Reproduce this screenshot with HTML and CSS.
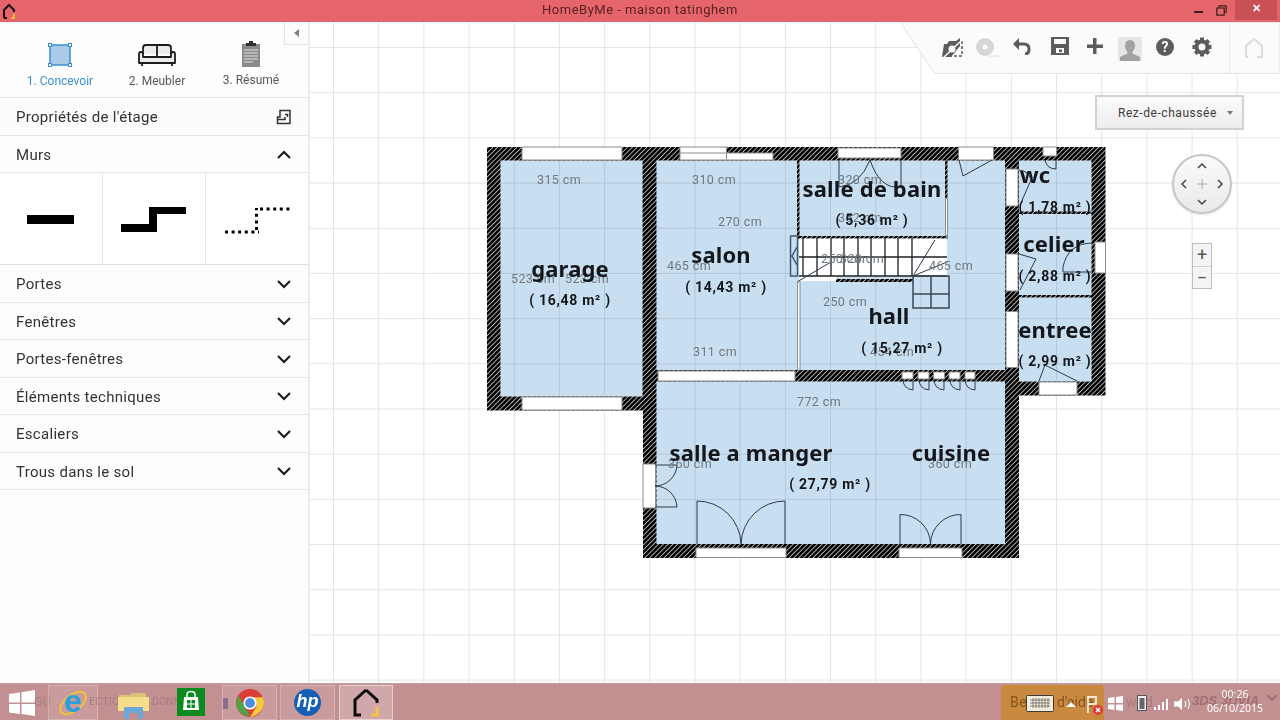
FILE: index.html
```html
<!DOCTYPE html>
<html lang="fr">
<head>
<meta charset="utf-8">
<title>HomeByMe - maison tatinghem</title>
<link rel="stylesheet" href="styles.css">
</head>
<body>
<div class="app">
  <header class="titlebar">
    <svg class="app-logo" width="16" height="18" viewBox="0 0 16 18"><path class="logo-black" d="M3 15V7l5-5 5 5v2"/><path class="logo-black" d="M3 15h3"/><path class="logo-yellow" d="M13 11v4h-3"/></svg>
    <div class="title">HomeByMe - maison tatinghem</div>
    <div class="winbtns">
      <span class="win-min"></span>
      <svg class="win-max" width="11" height="11" viewBox="0 0 11 11"><path d="M3 2.5V.8h7.2v6.4H8.2M.8 3h7.4v7.2H.8z"/></svg>
      <span class="win-close">✕</span>
    </div>
  </header>

  <div class="main">
    <aside class="sidebar">
      <nav class="steps">
        <div class="step step-active">
          <svg width="26" height="26" viewBox="0 0 26 26"><rect class="ic-sq" x="3" y="3" width="20" height="20"/><rect class="ic-h" x="1.5" y="1.5" width="3" height="3"/><rect class="ic-h" x="21.5" y="1.5" width="3" height="3"/><rect class="ic-h" x="1.5" y="21.5" width="3" height="3"/><rect class="ic-h" x="21.5" y="21.5" width="3" height="3"/></svg>
          <span>1. Concevoir</span>
        </div>
        <div class="step">
          <svg width="40" height="26" viewBox="0 0 40 26"><path class="ic-sofa" d="M6 12V6q0-3 3-3h22q3 0 3 3v6M20 3v12M6 15h28"/><path class="ic-sofa" d="M2 12q0-2 2-2t2 2v3h28v-3q0-2 2-2t2 2v9H2zM5 21v3M35 21v3"/></svg>
          <span>2. Meubler</span>
        </div>
        <div class="step">
          <svg width="22" height="26" viewBox="0 0 22 26"><rect class="ic-clip" x="2" y="3" width="18" height="23"/><path class="ic-clip-top" d="M6 2h3V0h4v2h3v3H6z"/><path class="ic-clip-l" d="M4 9h14M4 12h14M4 15h14M4 18h14M4 21h9"/></svg>
          <span>3. Résumé</span>
        </div>
      </nav>
      <div class="row row-props">
        <span>Propriétés de l'étage</span>
        <svg width="16" height="16" viewBox="0 0 16 16"><path class="ic-plan" d="M4 1.5h10v13H1.5V8H4zM9 5.5h2.500V8M1.500 10.500H9V8"/></svg>
      </div>
      <div class="row">
        <span>Murs</span>
        <svg class="chev" width="14" height="9" viewBox="0 0 14 9"><path d="M1 8l6-6 6 6"/></svg>
      </div>
      <div class="walls">
        <div class="wall-tool"><svg width="48" height="10" viewBox="0 0 48 10"><rect width="47" height="9"/></svg></div>
        <div class="wall-tool"><svg width="68" height="28" viewBox="0 0 68 28"><path d="M1 26V18h28V1h37v7H37v18z"/></svg></div>
        <div class="wall-tool"><svg width="66" height="28" viewBox="0 0 66 28"><path class="dots" d="M1 26H35M32.500 24V2M36 3H66"/></svg></div>
      </div>
      <div class="row"><span>Portes</span><svg class="chev" width="14" height="9" viewBox="0 0 14 9"><path d="M1 1l6 6 6-6"/></svg></div>
      <div class="row"><span>Fenêtres</span><svg class="chev" width="14" height="9" viewBox="0 0 14 9"><path d="M1 1l6 6 6-6"/></svg></div>
      <div class="row"><span>Portes-fenêtres</span><svg class="chev" width="14" height="9" viewBox="0 0 14 9"><path d="M1 1l6 6 6-6"/></svg></div>
      <div class="row"><span>Éléments techniques</span><svg class="chev" width="14" height="9" viewBox="0 0 14 9"><path d="M1 1l6 6 6-6"/></svg></div>
      <div class="row"><span>Escaliers</span><svg class="chev" width="14" height="9" viewBox="0 0 14 9"><path d="M1 1l6 6 6-6"/></svg></div>
      <div class="row"><span>Trous dans le sol</span><svg class="chev" width="14" height="9" viewBox="0 0 14 9"><path d="M1 1l6 6 6-6"/></svg></div>
      <button class="collapse" aria-label="Replier"></button>
    </aside>

    <section class="canvas">
      <svg class="plan" width="970" height="661" viewBox="310 22 970 661">
        <defs>
          <pattern id="hatch" patternUnits="userSpaceOnUse" width="3.400" height="3.400" patternTransform="rotate(45)">
            <rect width="3.400" height="3.400" fill="#000"/>
            <rect width="0.800" height="3.400" fill="#cfcfcf"/>
          </pattern>
        </defs>
        <g class="rooms">
          <rect x="500.5" y="160.500" width="142" height="236"/>
          <rect x="656.5" y="160.500" width="348.500" height="209.500"/>
          <rect x="656.5" y="381.500" width="348.500" height="162.500"/>
          <rect x="1019" y="160.500" width="72.500" height="51"/>
          <rect x="1019" y="214" width="72.500" height="81"/>
          <rect x="1019" y="297.500" width="72.500" height="84"/>
        </g>
        <path fill="url(#hatch)" fill-rule="evenodd" d="M487 147H1105.500V395.500H1019V558H643V410.500H487ZM500.500 160.500V396.500H642.500V160.500ZM656.500 160.500V370H1005V160.500ZM656.500 381.500V544H1005V381.500ZM1019 160.500V211.500H1091.500V160.500ZM1019 214V295H1091.500V214ZM1019 297.500V381.500H1091.500V297.500Z"/>
        <g fill="url(#hatch)">
          <rect x="797" y="160" width="2.500" height="76"/>
          <rect x="945" y="160" width="2.500" height="38"/>
          <rect x="798" y="236" width="149.500" height="2.800"/>
          <rect x="836" y="279" width="77" height="3"/>
        </g>
        <!-- stairs -->
        <rect class="stair-w" x="799" y="238.500" width="148" height="38"/>
        <rect class="stair-w" x="799" y="276" width="37" height="5"/>
        <path class="dark" d="M803 238v38M817 238v38M831 238v38M844 238v38M858 238v38M871 238v38M885 238v38M898 238v38M912 238v38M799 257H947M799 276H947"/>
        <path class="stair-b" d="M913 276h36v32h-36zM931 276v32M913 294h36"/>
        <path class="stair-s" d="M790.500 236h7v40h-7zM797 247l-5 9 5 9"/>
        <path class="line" d="M797 282l34-20M913 276l22-36M913 276l34-14"/>
        <!-- windows and openings -->
        <g class="win">
          <rect x="522" y="147" width="100" height="13"/>
          <rect x="522" y="397" width="100" height="13"/>
          <rect x="680" y="147" width="46.500" height="13"/>
          <rect x="726.500" y="153" width="46.500" height="7"/>
          <path d="M680 153h46.500"/>
          <rect x="838" y="148" width="63" height="10"/>
          <rect x="958.500" y="147" width="35" height="13"/>
          <rect x="1043" y="147" width="13.500" height="9"/>
          <rect x="1095" y="242" width="10.500" height="31"/>
          <rect x="1006" y="169" width="12" height="37"/>
          <rect x="1006" y="254" width="12" height="37"/>
          <rect x="1006" y="311.500" width="12" height="56"/>
          <rect x="1039" y="382" width="38" height="13"/>
          <rect x="658" y="371" width="137" height="10"/>
          <rect x="902" y="372" width="11" height="7"/>
          <rect x="918" y="372" width="11" height="7"/>
          <rect x="933.500" y="372" width="11" height="7"/>
          <rect x="949" y="372" width="11" height="7"/>
          <rect x="965" y="372" width="10" height="7"/>
          <rect x="696" y="548" width="90" height="9.500"/>
          <rect x="899" y="548" width="63" height="9.500"/>
          <rect x="643" y="464" width="12.500" height="44"/>
          <rect x="797.500" y="282" width="2.500" height="88"/>
          <rect x="945.500" y="198" width="2" height="38"/>
        </g>
        <!-- door swings -->
        <g class="line">
          <path d="M697 544V501A44 44 0 0 1 741 544A44 44 0 0 1 785 501V544"/>
          <path d="M900 544V514.500A30 30 0 0 1 930.500 544A30 30 0 0 1 961 514.500V544"/>
          <path d="M655 465H677A22 22 0 0 1 655 486A22 22 0 0 1 677 507H655"/>
          <path d="M839 160V187M901 160V187M839 187Q860 185 870 160M901 187Q880 190 870 160"/>
          <path d="M959 160l4 16 29-16"/>
          <path d="M1045 160q2 9 11 9v-9"/>
          <path d="M1019 170q10 1 12 10l-11 25"/>
          <path d="M1019 254l17 5-16 31"/>
          <path d="M1093 243q-25 0-30 24v5h28"/>
          <path d="M1039 381l6-16 32 16"/>
          <path d="M903 379q0 10 10 11v-11M919 379q0 10 10 11v-11M934 379q0 10 10 11v-11M950 379q0 10 10 11v-11M965 379q0 10 10 11v-11"/>
        </g>
        <g class="dim">
          <text x="559" y="184">315 cm</text>
          <text x="533" y="283">523 cm</text>
          <text x="587" y="283">523 cm</text>
          <text x="714" y="184">310 cm</text>
          <text x="740" y="226">270 cm</text>
          <text x="689" y="270">465 cm</text>
          <text x="715" y="356">311 cm</text>
          <text x="860" y="184">320 cm</text>
          <text x="860" y="222">352 cm</text>
          <text x="843" y="263">250 cm</text>
          <text x="862" y="263">320 cm</text>
          <text x="951" y="270">465 cm</text>
          <text x="845" y="306">250 cm</text>
          <text x="892" y="356">454 cm</text>
          <text x="819" y="406">772 cm</text>
          <text x="690" y="468">360 cm</text>
          <text x="950" y="468">360 cm</text>
        </g>
        <g class="room-name">
          <text x="570" y="277">garage</text>
          <text x="721" y="263">salon</text>
          <text x="872" y="197">salle de bain</text>
          <text x="1035" y="183">wc</text>
          <text x="1054" y="252">celier</text>
          <text x="1055" y="338">entree</text>
          <text x="889" y="324">hall</text>
          <text x="751" y="461">salle a manger</text>
          <text x="951" y="461">cuisine</text>
        </g>
        <g class="room-area">
          <text x="570" y="305">( 16,48 m² )</text>
          <text x="726" y="292">( 14,43 m² )</text>
          <text x="872" y="225">( 5,36 m² )</text>
          <text x="1055" y="212">( 1,78 m² )</text>
          <text x="1055" y="281">( 2,88 m² )</text>
          <text x="1055" y="366">( 2,99 m² )</text>
          <text x="902" y="353">( 15,27 m² )</text>
          <text x="830" y="489">( 27,79 m² )</text>
        </g>
      </svg>

      <div class="toolbar">
        <svg class="tb-shape" width="380" height="52" viewBox="0 0 380 52"><path d="M0 0H380V51.500H35Z"/><path class="tb-div" d="M329.500 0V51"/></svg>
        <svg class="tb-ic" style="left:40px" width="24" height="22" viewBox="0 0 24 22"><path class="t-fill" d="M2 20L4 7h3l2-3h7l4-3v8l-9 11z"/><path class="t-dash" d="M22 4v15H8"/><circle class="t-hole" cx="12" cy="12" r="3.500"/><path class="t-cut" d="M3 21L22 3"/></svg>
        <svg class="tb-ic" style="left:75px" width="26" height="20" viewBox="0 0 26 20"><circle class="t-off" cx="10" cy="10" r="9"/><circle class="t-hole" cx="10" cy="10" r="2.500"/><path class="t-offl" d="M12 19h13"/></svg>
        <svg class="tb-ic" style="left:112px" width="20" height="18" viewBox="0 0 20 18"><path class="t-undo" d="M5 7h7q5 0 5 5t-4 5"/><path class="t-fill" d="M1 7l6-6v12z"/></svg>
        <svg class="tb-ic" style="left:151px" width="18" height="18" viewBox="0 0 18 18"><path class="t-fill" fill-rule="evenodd" d="M0 0H18V18H0ZM3 2V7H15V2ZM5 11V16H13V11ZM8 12.500h3v2.500h-3z"/></svg>
        <svg class="tb-ic" style="left:186px" width="18" height="18" viewBox="0 0 18 18"><path class="t-fill" d="M7 1h3.500v6.500H17V11h-6.500v6H7v-6H1V7.500h6z"/></svg>
        <svg class="tb-ic" style="left:218px" width="24" height="24" viewBox="0 0 24 24"><rect class="t-avbg" width="24" height="24"/><path class="t-av" d="M12 3q5 0 5 6 0 3-2.500 6v1.500L22 20v4H2v-4l7.500-3.500V15Q7 12 7 9q0-6 5-6z"/></svg>
        <div class="tb-help">?</div>
        <svg class="tb-ic" style="left:292px" width="20" height="20" viewBox="0 0 20 20"><circle class="t-gear" cx="10" cy="10" r="5.500"/><path class="t-gear-t" d="M10 0.500V19.500M0.500 10H19.500M3.300 3.300L16.700 16.700M16.700 3.300L3.300 16.700"/></svg>
        <svg class="tb-ic" style="left:344px" width="20" height="22" viewBox="0 0 20 22"><path class="t-home" d="M4 20H2V9l8-7 8 7v11h-2"/><path class="t-home" d="M13 20h3"/></svg>
      </div>

      <button class="floor-select"><span>Rez-de-chaussée</span><i class="caret"></i></button>

      <div class="compass">
        <svg width="60" height="60" viewBox="0 0 60 60"><path class="cp-a" d="M26 14l4-4 4 4M26 46l4 4 4-4M14 26l-4 4 4 4M46 26l4 4-4 4"/><path class="cp-c" d="M30 25v10M25 30h10"/></svg>
      </div>

      <div class="zoom">
        <div class="zoom-btn">+</div>
        <div class="zoom-btn">−</div>
      </div>
    </section>
  </div>

  <footer class="taskbar">
    <svg class="start" width="26" height="26" viewBox="0 0 26 26"><path d="M0 4l11-1.500V12.500H0zM12.500 2.300L26 0V12.500H12.500zM0 14h11v10L0 22.500zM12.500 14H26v12l-13.500-2z"/></svg>
    <span class="ghost g1">GU</span>
    <div class="tb-app a1">
      <svg width="32" height="34" viewBox="0 0 32 34"><ellipse class="ie-ring" cx="16" cy="17" rx="15" ry="8" transform="rotate(-38 16 17)"/><text class="ie-e" x="16" y="26">e</text></svg>
    </div>
    <span class="ghost g2">ECTIO</span>
    <div class="tb-plain p1">
      <svg width="32" height="30" viewBox="0 0 32 30"><path class="fold-b" d="M1 6h11l2-2h14v6H1z"/><path class="fold-y" d="M0 8h31v14H0z"/><path class="fold-l" d="M6 30V18h19v12h-5v-6h-9v6z"/></svg>
    </div>
    <span class="ghost g3">DONN</span>
    <div class="tb-plain p2">
      <svg width="28" height="28" viewBox="0 0 28 28"><rect class="store" width="28" height="28"/><path class="store-bag" d="M7 9h14l1 13H6z"/><path class="store-h" d="M10 9V6.500q0-3 4-3t4 3V9"/><path class="store-w" d="M10 12h3.500v3.500H10zM14.500 12H18v3.500h-3.500zM10 16.500h3.500V20H10zM14.500 16.500H18V20h-3.500z"/></svg>
    </div>
    <div class="tb-app a2">
      <i class="flag-mark"></i>
      <svg width="28" height="28" viewBox="0 0 34 34"><circle class="ch-r" cx="17" cy="17" r="17"/><path class="ch-g" d="M3 8L11 22 17 33Q5 33 1 22 0 14 3 8z"/><path class="ch-y" d="M17 10h16q3 11-3 17-4 5-13 7l8-13z"/><circle class="ch-w" cx="17" cy="17" r="8"/><circle class="ch-b" cx="17" cy="17" r="6"/></svg>
    </div>
    <div class="tb-app a3">
      <div class="hp">hp</div>
    </div>
    <div class="tb-app a4">
      <svg width="26" height="30" viewBox="0 0 26 30"><path class="hb-k" d="M13 2L2 12v15h6"/><path class="hb-k" d="M13 2l11 10v3"/><path class="hb-y" d="M24 19v8h-6"/></svg>
    </div>
    <div class="tray-orange">
      <span class="ghost o1">Be</span><span class="ghost o2">d'aide</span>
      <svg class="kb" width="28" height="17" viewBox="0 0 28 17"><rect class="kb-o" x="0.500" y="0.500" width="27" height="16" rx="1"/><path class="kb-k" d="M4 5h20M4 8h20M4 11h20M7 3v10M10 3v10M13 3v10M16 3v10M19 3v10M22 3v10"/></svg>
      <svg class="up" width="10" height="6" viewBox="0 0 10 6"><path d="M0 6l5-5 5 5z"/></svg>
      <svg class="flag" width="16" height="20" viewBox="0 0 16 20"><path class="fl-w" d="M1 1v17M1 2h8v7H1"/><circle class="fl-r" cx="11" cy="15" r="5"/><path class="fl-x" d="M9 13l4 4M13 13l-4 4"/></svg>
    </div>
    <div class="tray">
      <svg width="15" height="15" viewBox="0 0 15 15"><path class="w" d="M0 2l6.500-1V7H0zM8 1l7-1v7H8zM0 8.500h6.500V14L0 13zM8 8.500h7V15l-7-1z"/></svg>
      <span class="ghost o3">wed</span>
      <svg class="t-batt" width="10" height="17" viewBox="0 0 10 17"><rect class="b-o" x="0.500" y="1.500" width="9" height="15"/><rect class="b-i" x="2.500" y="4" width="5" height="11"/></svg>
      <svg class="t-net" width="16" height="12" viewBox="0 0 16 12"><path class="w" d="M0 9h2v3H0zM4 7h2v5H4zM8 4h2v8H8zM12 1h2v11h-2z"/></svg>
      <svg class="t-vol" width="18" height="14" viewBox="0 0 18 14"><path class="w" d="M0 4.500h4L8 1v12L4 9.500H0z"/><path class="v-l" d="M11 4q2 3 0 6M14 2q3 5 0 10"/></svg>
      <span class="brand">3DS 3DVIA</span>
      <div class="clock"><span>00:26</span><span>06/10/2015</span></div>
      <svg class="t-chev" width="12" height="8" viewBox="0 0 12 8"><path d="M1 1l5 5 5-5"/></svg>
    </div>
  </footer>
</div>
</body>
</html>
```
FILE: styles.css
```css
* { box-sizing: border-box; }
html, body { margin: 0; padding: 0; }
body { width: 1280px; height: 720px; overflow: hidden; font-family: "Roboto", "Noto Sans", sans-serif; color: #333; background: #fff; }
.app { display: flex; flex-direction: column; height: 720px; }

/* title bar */
.titlebar { height: 22px; flex: none; background: #e5656a; display: flex; align-items: center; position: relative; }
.app-logo { margin: 2px 0 0 1px; }
.logo-black { fill: none; stroke: #1a1012; stroke-width: 2; }
.logo-yellow { fill: none; stroke: #f5b93a; stroke-width: 2; }
.title { position: absolute; left: 0; right: 0; top: 2px; text-align: center; font-size: 13px; color: #5a2225; letter-spacing: .5px; }
.winbtns { margin-left: auto; display: flex; align-items: center; height: 22px; position: relative; }
.win-min { width: 9px; height: 2px; background: #38201f; margin: 2px 13px 0 0; }
.win-max { margin: -2px 8px 0 0; }
.win-max path { fill: none; stroke: #38201f; stroke-width: 1.2; }
.win-close { width: 42px; height: 20px; margin: 0 3px 2px 0; background: #c85155; color: #fff; font-size: 11px; font-weight: 700; text-align: center; line-height: 18px; }

/* layout */
.main { flex: 1; display: flex; min-height: 0; }
.sidebar { width: 310px; flex: none; background: #fdfdfd; border-right: 2px solid #ececec; position: relative; }
.steps { height: 76px; display: flex; border-bottom: 1px solid #e6e6e6; }
.step { display: flex; flex-direction: column; align-items: center; font-size: 12px; color: #56585a; }
.step:nth-child(1) { width: 120px; padding-top: 20px; }
.step:nth-child(2) { width: 74px; padding-top: 20px; }
.step:nth-child(3) { width: 114px; padding-top: 19px; }
.step svg { height: 26px; margin-bottom: 6px; }
.step-active { color: #3d8fd0; }
.step span { white-space: nowrap; line-height: 14px; }
.ic-sq { fill: #a9cbe8; stroke: #3a8ed6; stroke-width: 1.5; }
.ic-h { fill: #fff; stroke: #3a8ed6; stroke-width: 1; }
.ic-sofa { fill: #ececec; stroke: #1c1c1c; stroke-width: 1.8; stroke-linejoin: round; }
.ic-clip { fill: #8a8a8a; }
.ic-clip-top { fill: #2e2e2e; }
.ic-clip-l { fill: none; stroke: #e4e4e4; stroke-width: 1; }
.ic-plan { fill: none; stroke: #333; stroke-width: 1.500; }

.row { height: 37.5px; padding: 2px 16px 0 16px; display: flex; align-items: center; justify-content: space-between; font-size: 15px; letter-spacing: .3px; color: #333; border-bottom: 1px solid #e4e4e4; }
.row-props { background: #fbfbfb; }
.chev { flex: none; margin-right: 1px; }
.chev path { fill: none; stroke: #1e1e1e; stroke-width: 2.200; }
.walls { height: 92px; display: flex; border-bottom: 1px solid #e0e0e0; background: #fff; }
.wall-tool { flex: 1; display: flex; align-items: center; justify-content: center; border-right: 1px solid #e8e8e8; }
.wall-tool:last-child { border-right: 0; }
.wall-tool svg { fill: #000; margin-top: 2px; }
.dots { fill: none; stroke: #000; stroke-width: 3; stroke-dasharray: 3 3.600; }
.collapse { position: absolute; left: 284px; top: 0; width: 24px; height: 23px; padding: 0; background: #fcfcfc; border: 1px solid #e2e2e2; border-width: 0 0 1px 1px; }
.collapse::after { content: ""; position: absolute; left: 9px; top: 7px; border: 4px solid transparent; border-right: 5px solid #808080; border-left: 0; }

/* canvas */
.canvas { flex: 1; position: relative; background-color: #fff;
  background-image: linear-gradient(90deg, #e4e4e4 1px, transparent 1px), linear-gradient(#e4e4e4 1px, transparent 1px);
  background-size: 45.2px 45.2px; background-position: 23px 25px; overflow: hidden; }
.plan { position: absolute; left: 0; top: 0; }
.rooms { fill: #c8dff2; mix-blend-mode: multiply; }
.stair-w { fill: #fff; }
.dark { fill: none; stroke: #1c1f24; stroke-width: 1.300; }
.stair-b { fill: none; stroke: #3a4753; stroke-width: 1.500; }
.stair-s { fill: none; stroke: #3f5a74; stroke-width: 1.500; }
.line { fill: none; stroke: #2c3a48; stroke-width: 1; }
.win rect { fill: #fff; stroke: #8c8c8c; stroke-width: 1; }
.win path { fill: none; stroke: #8c8c8c; stroke-width: 1; }
.dim text { font-family: "Roboto", sans-serif; font-size: 12.500px; fill: #70787f; text-anchor: middle; letter-spacing: .4px; }
.room-name text { font-family: "Noto Sans", sans-serif; font-weight: 700; font-size: 22px; fill: #14161a; text-anchor: middle; letter-spacing: .15px; }
.room-area text { font-family: "Roboto", sans-serif; font-weight: 700; font-size: 14px; fill: #14161a; text-anchor: middle; letter-spacing: .7px; }

/* toolbar overlay */
.toolbar { position: absolute; left: 590px; top: 0; width: 380px; height: 52px; }
.tb-shape { position: absolute; left: 0; top: 0; }
.tb-shape path { fill: #fbfbfb; stroke: #e2e2e2; stroke-width: 1; }
.tb-shape .tb-div { stroke: #ebebeb; }
.tb-ic { position: absolute; top: 15px; }
.t-fill { fill: #5c5c5c; }
.t-dash { fill: none; stroke: #5c5c5c; stroke-width: 1.500; stroke-dasharray: 3 2; }
.t-hole { fill: #fbfbfb; }
.t-cut { stroke: #fbfbfb; stroke-width: 1.500; }
.t-off { fill: #d6d6d6; }
.t-offl { stroke: #e2e2e2; fill: none; }
.t-undo { fill: none; stroke: #5c5c5c; stroke-width: 3; }
.t-avbg { fill: #e6e6e6; }
.t-av { fill: #a2a2a2; }
.tb-help { position: absolute; left: 256px; top: 16px; width: 18px; height: 18px; border-radius: 50%; background: #5c5c5c; color: #fbfbfb; font-size: 14px; font-weight: 700; line-height: 18px; text-align: center; }
.t-gear { fill: none; stroke: #5c5c5c; stroke-width: 4; }
.t-gear-t { fill: none; stroke: #5c5c5c; stroke-width: 4; stroke-dasharray: 4 11 4; }
.t-home { fill: none; stroke: #dcdcdc; stroke-width: 2; }

.floor-select { position: absolute; left: 785px; top: 73px; width: 149px; height: 35px; padding: 0 0 0 21px; display: flex; align-items: center; background: linear-gradient(#fbfbfb, #ededed); border: 2px solid #d2d2d2; font-family: "Roboto", sans-serif; font-size: 12px; letter-spacing: .55px; color: #3c3c3c; }
.caret { margin-left: 10px; border: 3.500px solid transparent; border-top: 4px solid #777; border-bottom: 0; }

.compass { position: absolute; left: 862px; top: 132px; width: 60px; height: 60px; border-radius: 50%; background: linear-gradient(#fbfbfb, #e9e9e9); border: 2px solid #c6c6c6; box-shadow: 0 1px 2px rgba(0,0,0,.12); }
.compass svg { display: block; margin: -2px; }
.cp-a { fill: none; stroke: #444; stroke-width: 1.500; }
.cp-c { fill: none; stroke: #aaa; stroke-width: 1; }
.zoom { position: absolute; left: 882px; top: 221px; width: 20px; display: flex; flex-direction: column; border: 1px solid #bdbdbd; background: #f4f4f4; }
.zoom-btn { height: 22px; text-align: center; font-size: 18px; line-height: 21px; color: #555; }
.zoom-btn + .zoom-btn { border-top: 1px solid #d0d0d0; }

/* taskbar */
.taskbar { height: 37px; flex: none; background: #c39092; border-top: 1px solid #c9a0a2; position: relative; display: flex; align-items: center; }
.start { position: absolute; left: 9px; top: 6px; fill: #fff; }
.ghost { position: absolute; color: #a87a80; font-size: 12px; letter-spacing: .5px; }
.g1 { left: 34px; top: 11px; }
.g2 { left: 89px; top: 11px; font-size: 11px; letter-spacing: 0; }
.g3 { left: 152px; top: 11px; font-size: 10.500px; letter-spacing: 0; }
.tb-app { position: absolute; top: 1px; height: 35px; display: flex; align-items: center; justify-content: center; background: rgba(255,255,255,.1); border: 1px solid rgba(255,255,255,.22); }
.tb-plain { position: absolute; top: 3px; }
.a1 { left: 48px; width: 50px; }
.a2 { left: 222px; width: 55px; }
.a3 { left: 280px; width: 55px; }
.a4 { left: 339px; width: 54px; background: rgba(255,255,255,.22); border-color: rgba(255,255,255,.45); }
.p1 { left: 118px; top: 5px; }
.p2 { left: 177px; top: 4px; }
.flag-mark { position: absolute; left: 0; top: 12px; width: 5px; height: 11px; background: #8d6a90; }
.ie-ring { fill: none; stroke: #f0c23c; stroke-width: 2; }
.ie-e { font-family: "Liberation Sans", sans-serif; font-size: 32px; font-weight: 700; fill: #2a9fd8; text-anchor: middle; }
.fold-b { fill: #d9c27a; }
.fold-y { fill: #f5dd8a; }
.fold-l { fill: #6aa7d6; }
.store { fill: #0b8a1f; }
.store-bag { fill: #fff; }
.store-h { fill: none; stroke: #fff; stroke-width: 1.500; }
.store-w { fill: #0b8a1f; }
.ch-r { fill: #dc3d34; }
.ch-g { fill: #4aa546; }
.ch-y { fill: #f6ca3c; }
.ch-w { fill: #fff; }
.ch-b { fill: #4d8de0; }
.hp { width: 27px; height: 27px; border-radius: 50%; background: #1560b4; color: #fff; font-family: "Liberation Sans", sans-serif; font-size: 18px; font-weight: 700; font-style: italic; line-height: 25px; text-align: center; }
.hb-k { fill: none; stroke: #0c0c0c; stroke-width: 3; }
.hb-y { fill: none; stroke: #f3c53a; stroke-width: 3; }
.tray-orange { position: absolute; left: 1001px; top: 1px; width: 103px; height: 36px; background: #c98a3f; border-radius: 3px 3px 0 0; }
.o1 { left: 9px; top: 9px; font-size: 14px; color: #85531f; }
.o2 { left: 56px; top: 9px; font-size: 14px; color: #85531f; letter-spacing: 0; }
.kb { position: absolute; left: 25px; top: 10px; }
.kb-o { fill: #f4ecd8; stroke: #3a3a3a; }
.kb-k { fill: none; stroke: #6a6a6a; stroke-width: .8; }
.up { position: absolute; left: 65px; top: 16px; fill: #fff; }
.flag { position: absolute; left: 86px; top: 10px; }
.fl-w { fill: none; stroke: #fff; stroke-width: 1.500; }
.fl-r { fill: #e0393a; }
.fl-x { stroke: #fff; stroke-width: 1.500; }
.tray { position: absolute; left: 1108px; top: 0; width: 172px; height: 36px; }
.tray svg, .tray .brand, .tray .clock { position: absolute; }
.tray > svg:first-child { left: 0; top: 12px; }
.w { fill: #fff; }
.o3 { left: 18px; top: 10px; font-size: 14px; color: #a87a80; }
.t-batt { left: 29px; top: 10px; }
.b-o { fill: #eee; stroke: #555; }
.b-i { fill: #666; }
.t-net { left: 46px; top: 14px; }
.t-vol { left: 66px; top: 13px; }
.v-l { fill: none; stroke: #fff; }
.brand { left: 84px; top: 9px; white-space: nowrap; font-family: "Liberation Sans", sans-serif; font-size: 13px; font-style: italic; font-weight: 700; color: #a06d72; }
.clock { left: 94px; top: 3px; width: 66px; display: flex; flex-direction: column; align-items: center; font-family: "Noto Sans", sans-serif; font-size: 10.500px; line-height: 14px; color: #fff; }
.t-chev { left: 158px; top: 10px; }
.t-chev path { fill: none; stroke: #a06d72; stroke-width: 2; }
```
